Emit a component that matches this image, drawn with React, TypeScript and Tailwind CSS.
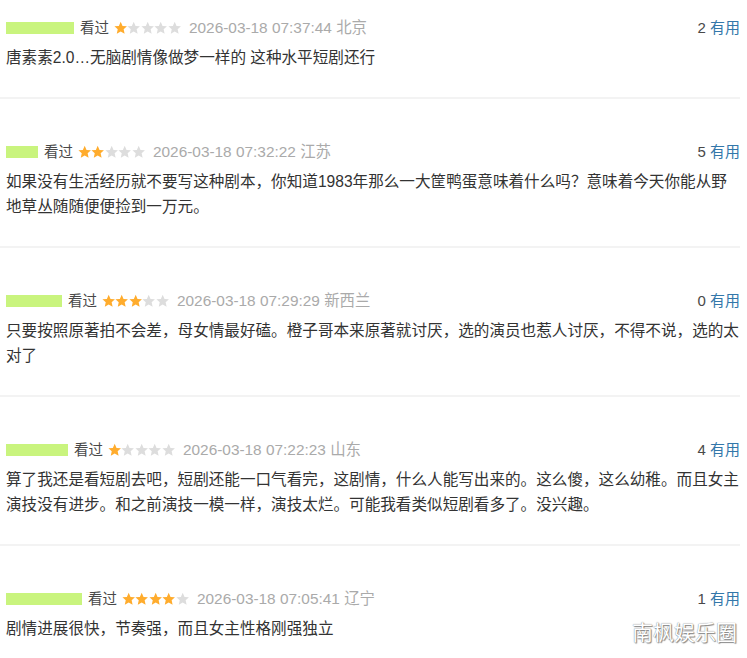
const font = { fontFamily: '"Liberation Sans", "Noto Sans CJK SC", sans-serif' };

type Review = {
  nameWidth: number;
  stars: number;
  time: string;
  place: string;
  useful: number;
  text: string;
};

const reviews: Review[] = [
  {
    nameWidth: 68,
    stars: 1,
    time: "2026-03-18 07:37:44",
    place: "北京",
    useful: 2,
    text: "唐素素2.0…无脑剧情像做梦一样的 这种水平短剧还行",
  },
  {
    nameWidth: 32,
    stars: 2,
    time: "2026-03-18 07:32:22",
    place: "江苏",
    useful: 5,
    text: "如果没有生活经历就不要写这种剧本，你知道1983年那么一大筐鸭蛋意味着什么吗？意味着今天你能从野地草丛随随便便捡到一万元。",
  },
  {
    nameWidth: 56,
    stars: 3,
    time: "2026-03-18 07:29:29",
    place: "新西兰",
    useful: 0,
    text: "只要按照原著拍不会差，母女情最好磕。橙子哥本来原著就讨厌，选的演员也惹人讨厌，不得不说，选的太对了",
  },
  {
    nameWidth: 62,
    stars: 1,
    time: "2026-03-18 07:22:23",
    place: "山东",
    useful: 4,
    text: "算了我还是看短剧去吧，短剧还能一口气看完，这剧情，什么人能写出来的。这么傻，这么幼稚。而且女主演技没有进步。和之前演技一模一样，演技太烂。可能我看类似短剧看多了。没兴趣。",
  },
  {
    nameWidth: 76,
    stars: 4,
    time: "2026-03-18 07:05:41",
    place: "辽宁",
    useful: 1,
    text: "剧情进展很快，节奏强，而且女主性格刚强独立",
  },
];

function Star({ on }: { on: boolean }) {
  return (
    <svg width="13.4" height="14" viewBox="0 0 24 24" className="shrink-0">
      <path
        d="M12 1l3.3 7.2 7.9.8-5.9 5.3 1.7 7.9L12 18.2l-7 4 1.7-7.9L.8 9l7.9-.8z"
        fill={on ? "#ffac2d" : "#dddddd"}
      />
    </svg>
  );
}

function ReviewItem({ review, first }: { review: Review; first: boolean }) {
  return (
    <div
      className={`border-b-2 border-[#f3f3f3] pl-[6px] pb-[27px] ${first ? "pt-[19px]" : "pt-[44px]"}`}
    >
      <div className="flex h-[18px] items-center text-[15px] leading-[18px]">
        <div
          className="h-[12px] shrink-0 bg-[#c9f47e]"
          style={{ width: review.nameWidth }}
        />
        <span className="ml-[6px] text-[14.5px] text-[#494949]">看过</span>
        <div className="ml-[5px] flex">
          {[0, 1, 2, 3, 4].map((i) => (
            <Star key={i} on={i < review.stars} />
          ))}
        </div>
        <span className="ml-[8px] text-[15.4px] text-[#aaaaaa]">
          {review.time} {review.place}
        </span>
        <span className="ml-auto text-[#494949]">
          {review.useful} <span className="text-[#3377aa]">有用</span>
        </span>
      </div>
      <p className="mt-[8px] text-[15.6px] leading-[25px] text-[#333333]">
        {review.text}
      </p>
    </div>
  );
}

export default function App() {
  return (
    <div className="relative h-[658px] w-[747px] overflow-hidden bg-white" style={font}>
      <div className="w-[740px]">
        {reviews.map((r, i) => (
          <ReviewItem key={i} review={r} first={i === 0} />
        ))}
      </div>
      <div
        className="absolute right-[10px] top-[620px] text-[21px] leading-[26px] text-white"
        style={{ textShadow: "0 0 1px #666, 1px 1px 1px #888" }}
      >
        南枫娱乐圈
      </div>
    </div>
  );
}
